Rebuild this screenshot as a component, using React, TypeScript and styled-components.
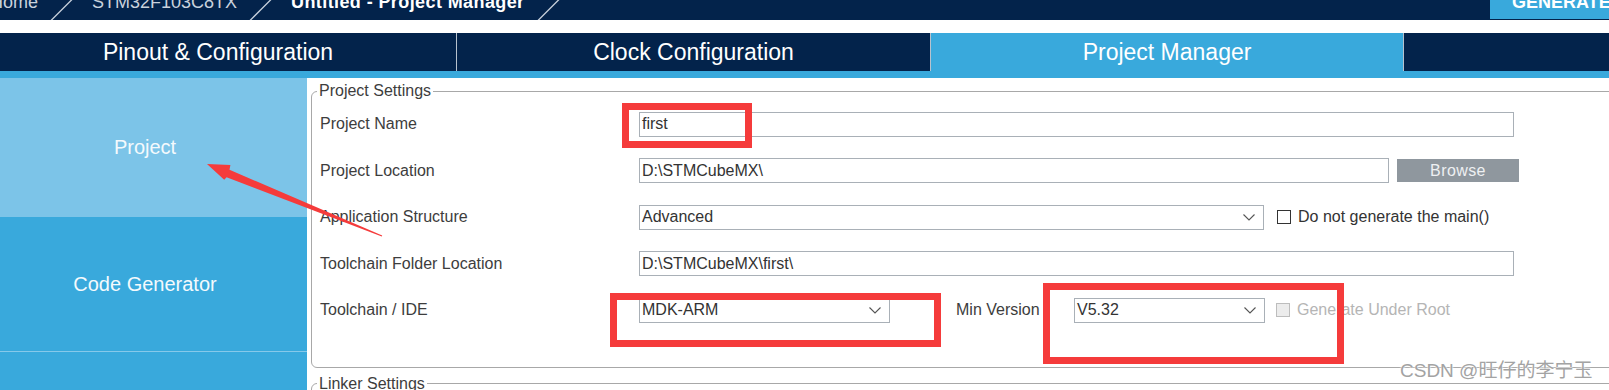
import React from 'react'
import styled, { createGlobalStyle } from 'styled-components'

const NAVY = '#03234b'
const BLUE = '#39a9dc'
const PALE = '#7cc4e8'
const RED = '#f53b3b'

const GlobalStyle = createGlobalStyle`
  html, body {
    margin: 0;
    padding: 0;
    background: #fff;
    overflow: hidden;
  }
  body {
    font-family: 'Liberation Sans', Arial, sans-serif;
  }
`

const Page = styled.div`
  position: relative;
  width: 1609px;
  height: 390px;
  overflow: hidden;
  background: #fff;
`

const TopBar = styled.div`
  display: flex;
  align-items: flex-start;
  height: 20px;
  background: ${NAVY};
  overflow: hidden;
`

const Crumb = styled.span<{ $current?: boolean }>`
  flex-shrink: 0;
  margin-top: -7px;
  font-size: 18px;
  line-height: 18px;
  white-space: nowrap;
  color: ${p => (p.$current ? '#fff' : '#c9d2dd')};
  font-weight: ${p => (p.$current ? 700 : 400)};
  letter-spacing: ${p => (p.$current ? '0.4px' : '0')};
  &:first-child {
    margin-left: -10px;
  }
`

const CrumbSep = styled.svg`
  flex-shrink: 0;
  width: 24px;
  height: 20px;
  margin: 0 18px 0 12px;
`

const GenerateButton = styled.div`
  display: flex;
  align-items: flex-start;
  margin-left: auto;
  width: 119px;
  height: 19px;
  padding-left: 22px;
  box-sizing: border-box;
  background: ${BLUE};
  overflow: hidden;
`

const GenerateLabel = styled.span`
  margin-top: -7px;
  font-size: 18px;
  line-height: 18px;
  font-weight: 700;
  color: #fff;
  white-space: nowrap;
`

const TabBar = styled.div`
  display: grid;
  grid-template-columns: 456px 474px 473px 1fr;
  height: 38px;
  margin-top: 13px;
  background: ${NAVY};
  border-bottom: 7px solid ${BLUE};
`

const Tab = styled.div<{ $active?: boolean }>`
  display: flex;
  align-items: center;
  justify-content: center;
  font-size: 23px;
  color: #fff;
  background: ${p => (p.$active ? BLUE : 'transparent')};
  &:first-child {
    padding-right: 20px;
  }
  & + & {
    border-left: 1px solid #b7c2ce;
  }
`

const Body = styled.div`
  display: grid;
  grid-template-columns: 307px 1fr;
  height: 312px;
`

const Sidebar = styled.div`
  display: flex;
  flex-direction: column;
  background: ${BLUE};
`

const SideItem = styled.div<{ $active?: boolean; $height: number }>`
  display: flex;
  align-items: center;
  justify-content: center;
  flex-shrink: 0;
  height: ${p => p.$height}px;
  padding-right: 17px;
  background: ${p => (p.$active ? PALE : BLUE)};
  border-bottom: 1px solid ${p => (p.$active ? PALE : '#86c9ea')};
  font-size: 20px;
  color: #f4fafd;
`

const Main = styled.div`
  padding: 4px 0 0 4px;
  overflow: hidden;
`

const Fieldset = styled.fieldset`
  margin: 0 -12px 0 0;
  padding: 1px 0 33px 8px;
  border: 1px solid #a8a8a8;
  border-radius: 6px;
  min-width: 0;
  & + & {
    margin-top: 7px;
  }
`

const Legend = styled.legend`
  margin-left: -3px;
  padding: 0 2px;
  font-size: 16px;
  line-height: 18px;
  color: #3d3d3d;
`

const FormRow = styled.div`
  display: grid;
  grid-template-columns: 319px 1fr;
  align-items: center;
  height: 46.5px;
`

const Label = styled.div`
  font-size: 16px;
  color: #3d3d3d;
  white-space: nowrap;
`

const Controls = styled.div`
  display: flex;
  align-items: center;
`

const Field = styled.div<{ $w: number }>`
  display: flex;
  align-items: center;
  justify-content: space-between;
  width: ${p => p.$w}px;
  height: 25px;
  padding: 0 2px;
  box-sizing: border-box;
  border: 1px solid #a9b0b7;
  background: #fff;
  font-size: 16px;
  color: #333;
  white-space: nowrap;
`

const Chevron = styled.svg`
  width: 12px;
  height: 7px;
  margin-right: 6px;
`

const BrowseButton = styled.div`
  display: flex;
  align-items: center;
  justify-content: center;
  width: 122px;
  height: 23px;
  margin-left: 8px;
  background: #8f979e;
  color: #eef0f2;
  font-size: 16px;
  letter-spacing: 0.4px;
`

const Checkbox = styled.span<{ $disabled?: boolean; $gap: number }>`
  display: inline-block;
  width: 14px;
  height: 14px;
  box-sizing: border-box;
  margin-left: ${p => p.$gap}px;
  border: 1px solid ${p => (p.$disabled ? '#bdbdbd' : '#333')};
  background: ${p => (p.$disabled ? '#ececec' : '#fff')};
`

const CheckLabel = styled.span<{ $disabled?: boolean }>`
  margin-left: 7px;
  font-size: 16px;
  color: ${p => (p.$disabled ? '#b5b5b5' : '#333')};
  white-space: nowrap;
`

const InlineLabel = styled(Label)`
  width: 118px;
  margin-left: 66px;
`

const RedBox = styled.div<{ $x: number; $y: number; $w: number; $h: number }>`
  position: absolute;
  left: ${p => p.$x}px;
  top: ${p => p.$y}px;
  width: ${p => p.$w}px;
  height: ${p => p.$h}px;
  box-sizing: border-box;
  border: 7px solid ${RED};
  pointer-events: none;
`

const ArrowLayer = styled.svg`
  position: absolute;
  left: 0;
  top: 0;
  width: 1609px;
  height: 390px;
  pointer-events: none;
`

const Watermark = styled.div`
  position: absolute;
  left: 1400px;
  top: 360px;
  font-family: 'Liberation Sans', 'Noto Sans CJK SC', sans-serif;
  font-size: 19px;
  line-height: 22px;
  color: #a3a3a3;
  text-shadow: 0 0 2px #fff, 0 0 2px #fff;
  white-space: nowrap;
`

const Sep = () => (
  <CrumbSep viewBox="0 0 24 20">
    <line x1="1" y1="20.5" x2="22" y2="-0.5" stroke="#c9d2dd" strokeWidth="1.3" />
  </CrumbSep>
)

const Select = ({ w, value }: { w: number; value: string }) => (
  <Field $w={w}>
    <span>{value}</span>
    <Chevron viewBox="0 0 12 7">
      <polyline points="0.5,0.5 6,6 11.5,0.5" fill="none" stroke="#555" strokeWidth="1.1" />
    </Chevron>
  </Field>
)

const App: React.FC = () => {
  return (
    <Page>
      <GlobalStyle />
      <TopBar>
        <Crumb>Home</Crumb>
        <Sep />
        <Crumb>STM32F103C8TX</Crumb>
        <Sep />
        <Crumb $current>Untitled - Project Manager</Crumb>
        <Sep />
        <GenerateButton>
          <GenerateLabel>GENERATE CODE</GenerateLabel>
        </GenerateButton>
      </TopBar>

      <TabBar>
        <Tab>Pinout &amp; Configuration</Tab>
        <Tab>Clock Configuration</Tab>
        <Tab $active>Project Manager</Tab>
        <Tab />
      </TabBar>

      <Body>
        <Sidebar>
          <SideItem $active $height={138}>Project</SideItem>
          <SideItem $height={134}>Code Generator</SideItem>
        </Sidebar>

        <Main>
          <Fieldset>
            <Legend>Project Settings</Legend>
            <FormRow>
              <Label>Project Name</Label>
              <Controls>
                <Field $w={875}>first</Field>
              </Controls>
            </FormRow>
            <FormRow>
              <Label>Project Location</Label>
              <Controls>
                <Field $w={750}>D:\STMCubeMX\</Field>
                <BrowseButton>Browse</BrowseButton>
              </Controls>
            </FormRow>
            <FormRow>
              <Label>Application Structure</Label>
              <Controls>
                <Select w={625} value="Advanced" />
                <Checkbox $gap={13} />
                <CheckLabel>Do not generate the main()</CheckLabel>
              </Controls>
            </FormRow>
            <FormRow>
              <Label>Toolchain Folder Location</Label>
              <Controls>
                <Field $w={875}>D:\STMCubeMX\first\</Field>
              </Controls>
            </FormRow>
            <FormRow>
              <Label>Toolchain / IDE</Label>
              <Controls>
                <Select w={251} value="MDK-ARM" />
                <InlineLabel>Min Version</InlineLabel>
                <Select w={191} value="V5.32" />
                <Checkbox $gap={11} $disabled />
                <CheckLabel $disabled>Generate Under Root</CheckLabel>
              </Controls>
            </FormRow>
          </Fieldset>
          <Fieldset>
            <Legend>Linker Settings</Legend>
          </Fieldset>
        </Main>
      </Body>

      <RedBox $x={622} $y={103} $w={130} $h={45} />
      <RedBox $x={610} $y={293} $w={331} $h={54} />
      <RedBox $x={1043} $y={283} $w={301} $h={81} />

      <ArrowLayer viewBox="0 0 1609 390">
        <polygon
          points="207,164 230.4,165 229.5,169.8 382.2,235.5 381.8,236.5 226.6,177.2 224.2,179.8"
          fill={RED}
        />
      </ArrowLayer>

      <Watermark>CSDN @旺仔的李宁玉</Watermark>
    </Page>
  )
}

export default App
